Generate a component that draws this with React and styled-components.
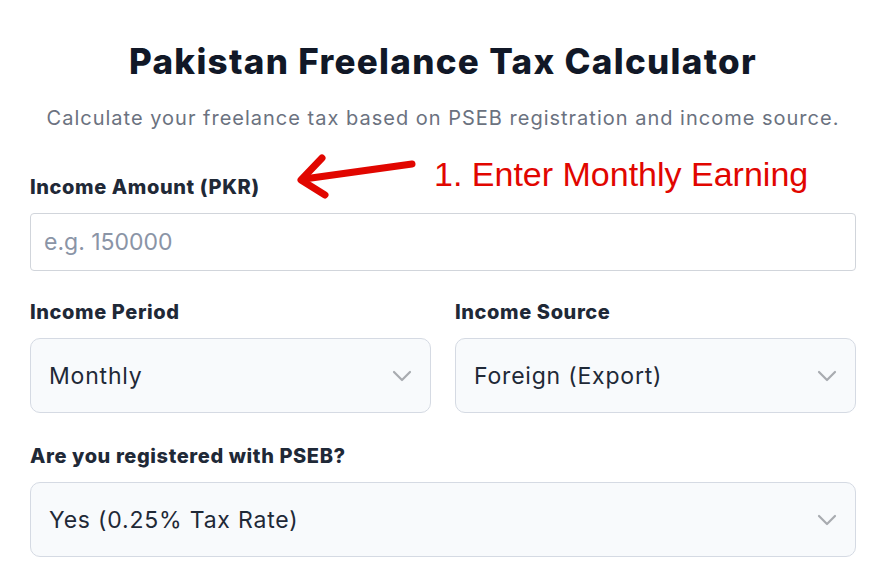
import styled, { createGlobalStyle } from 'styled-components';

const GlobalStyle = createGlobalStyle`
    body {
        margin: 0;
        background: #ffffff;
        font-family: "Inter", "Noto Sans", sans-serif;
    }
`;

const Page = styled.div`
    padding: 38px 29px 0 30px;
`;

const Title = styled.h1`
    margin: 0;
    text-align: center;
    font-size: 35px;
    font-weight: 800;
    letter-spacing: 1.3px;
    color: #111827;
    line-height: 46px;
`;

const Subtitle = styled.p`
    margin: 20px 0 0;
    text-align: center;
    font-size: 20px;
    font-weight: 400;
    letter-spacing: 1px;
    color: #6b7280;
    line-height: 28px;
`;

const Field = styled.div`
    display: flex;
    flex-direction: column;
    gap: 13px;
    margin-top: ${(p) => p.$top || 0}px;
`;

const LabelRow = styled.div`
    position: relative;
`;

const Label = styled.label`
    font-size: 20px;
    font-weight: 800;
    letter-spacing: 0.6px;
    color: #1f2937;
    line-height: 26px;
`;

const Note = styled.div`
    position: absolute;
    left: 256px;
    top: -25px;
    display: flex;
    align-items: center;
    gap: 18px;
`;

const NoteText = styled.span`
    font-family: "Liberation Sans", Arial, sans-serif;
    font-size: 34px;
    color: #e10600;
    white-space: nowrap;
`;

const Input = styled.input`
    box-sizing: border-box;
    width: 100%;
    height: 58px;
    padding: 0 13px;
    border: 1px solid #d1d5db;
    border-radius: 4px;
    font-family: inherit;
    font-size: 23px;
    color: #1f2937;
    outline: none;

    &::placeholder {
        color: #8a94a6;
    }
`;

const Row = styled.div`
    display: grid;
    grid-template-columns: 1fr 1fr;
    gap: 24px;
    margin-top: 28px;
`;

const Select = styled.div`
    box-sizing: border-box;
    height: 75px;
    display: flex;
    align-items: center;
    justify-content: space-between;
    padding: 0 18px 0 18px;
    background: #f8fafc;
    border: 1px solid #d5dae3;
    border-radius: 10px;
    font-size: 23px;
    letter-spacing: 0.8px;
    color: #1f2937;
`;

const Chevron = () => (
    <svg width="20" height="12" viewBox="0 0 20 12" fill="none">
        <path d="M2 2l8 8 8-8" stroke="#a8abb0" strokeWidth="2.2" strokeLinecap="round" strokeLinejoin="round" />
    </svg>
);

const Arrow = () => (
    <svg width="130" height="50" viewBox="0 0 130 50" fill="none">
        <path d="M126 15L18 30" stroke="#e10600" strokeWidth="7" strokeLinecap="round" />
        <path d="M36 9L15 31L39 46" stroke="#e10600" strokeWidth="7" strokeLinecap="round" strokeLinejoin="round" />
    </svg>
);

const Dropdown = ({ value }) => (
    <Select>
        <span>{value}</span>
        <Chevron />
    </Select>
);

const App = () => {
    return (
        <>
            <GlobalStyle />
            <Page>
                <Title>Pakistan Freelance Tax Calculator</Title>
                <Subtitle>Calculate your freelance tax based on PSEB registration and income source.</Subtitle>

                <Field $top={42}>
                    <LabelRow>
                        <Label>Income Amount (PKR)</Label>
                        <Note>
                            <Arrow />
                            <NoteText>1. Enter Monthly Earning</NoteText>
                        </Note>
                    </LabelRow>
                    <Input placeholder="e.g. 150000" />
                </Field>

                <Row>
                    <Field>
                        <Label>Income Period</Label>
                        <Dropdown value="Monthly" />
                    </Field>
                    <Field>
                        <Label>Income Source</Label>
                        <Dropdown value="Foreign (Export)" />
                    </Field>
                </Row>

                <Field $top={30}>
                    <Label>Are you registered with PSEB?</Label>
                    <Dropdown value="Yes (0.25% Tax Rate)" />
                </Field>
            </Page>
        </>
    );
};

export default App;
